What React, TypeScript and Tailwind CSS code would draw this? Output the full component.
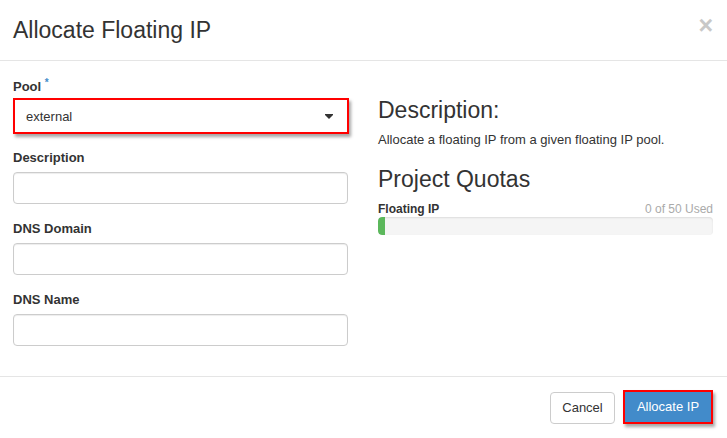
import React from 'react';

const font = { fontFamily: '"Liberation Sans", Arial, sans-serif' };

function Field({ label }: { label: string }) {
  return (
    <div className="mt-[15px]">
      <div className="h-[20px] text-[13px] font-bold leading-[20px] text-[#333]">{label}</div>
      <div className="mt-[4px] h-[32px] rounded-[4px] border border-[#ccc] bg-white shadow-[inset_0_1px_1px_rgba(0,0,0,0.075)]" />
    </div>
  );
}

export default function App() {
  return (
    <div className="w-[727px] h-[438px] overflow-hidden bg-white text-[#333]" style={font}>
      {/* Header */}
      <div className="h-[61px] border-b border-[#e5e5e5] px-[13px] flex items-center justify-between">
        <h4 className="text-[23px] leading-[26px] text-[#333] pb-[1px]">Allocate Floating IP</h4>
        <span className="text-[25px] font-bold leading-none text-[#c8c8c8] mr-[1px] -mt-[10px]">×</span>
      </div>

      {/* Body */}
      <div className="flex gap-[30px] px-[13px] pt-[15px] pb-[30px]">
        <div className="w-[336px]">
          <div className="h-[20px] text-[13px] font-bold leading-[20px] pt-[1px]">
            Pool <span className="relative -top-[5px] text-[10px] text-[#428bca]">*</span>
          </div>
          <div className="mt-[2px] h-[36px] border-2 border-[#f00] bg-white shadow-[2px_3px_3px_rgba(0,0,0,0.35)] flex items-center justify-between pl-[11px] pr-[14px] pt-[2px]">
            <span className="text-[13px] text-[#333]">external</span>
            <svg width="8" height="6" viewBox="0 0 8 6">
              <rect x="0" y="0" width="8" height="1" fill="#333" />
              <path d="M0 1 L8 1 L4 5 Z" fill="#333" />
            </svg>
          </div>
          <div className="-mt-[1px] w-[335px]">
            <Field label="Description" />
            <Field label="DNS Domain" />
            <Field label="DNS Name" />
          </div>
        </div>

        <div className="w-[335px] -ml-[1px]">
          <h3 className="mt-[22px] text-[23px] leading-[25px]">Description:</h3>
          <p className="mt-[8px] text-[13px] leading-[18px]">Allocate a floating IP from a given floating IP pool.</p>
          <h3 className="mt-[18px] text-[23px] leading-[25px]">Project Quotas</h3>
          <div className="mt-[9px] flex items-center justify-between text-[12px] leading-[16px]">
            <span className="font-bold">Floating IP</span>
            <span className="text-[#aaa]">0 of 50 Used</span>
          </div>
          <div className="h-[18px] rounded-[4px] bg-[#f5f5f5] shadow-[inset_0_1px_2px_rgba(0,0,0,0.1)] overflow-hidden">
            <div className="h-full w-[7px] bg-[#5cb85c] rounded-l-[4px]" />
          </div>
        </div>
      </div>

      {/* Footer */}
      <div className="border-t border-[#e5e5e5] px-[14px] pt-[13px] flex justify-end items-end gap-[8px]">
        <button className="h-[32px] w-[65px] rounded-[4px] border border-[#ccc] bg-white text-[13px] text-[#333]">Cancel</button>
        <button className="h-[34px] w-[90px] border-2 border-[#f00] bg-[#428bca] text-[13px] text-white shadow-[2px_3px_3px_rgba(0,0,0,0.35)]">Allocate IP</button>
      </div>
    </div>
  );
}
